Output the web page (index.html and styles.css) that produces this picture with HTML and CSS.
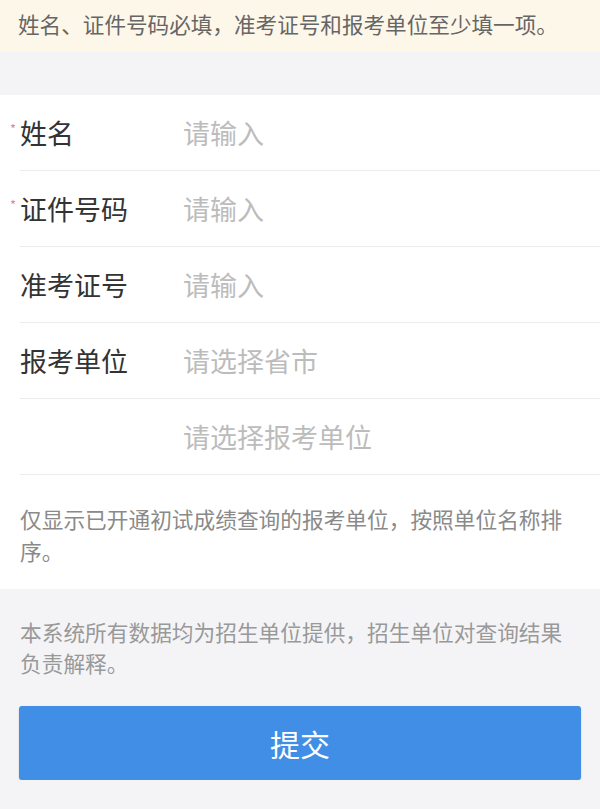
FILE: index.html
```html
<!DOCTYPE html>
<html lang="zh-CN">
<head>
<meta charset="utf-8">
<title>查询</title>
<link rel="stylesheet" href="styles.css">
</head>
<body>
<div class="notice">姓名、证件号码必填，准考证号和报考单位至少填一项。</div>
<div class="form">
  <div class="row"><span class="label req">姓名</span><span class="ph">请输入</span></div>
  <div class="row"><span class="label req">证件号码</span><span class="ph">请输入</span></div>
  <div class="row"><span class="label">准考证号</span><span class="ph">请输入</span></div>
  <div class="row"><span class="label">报考单位</span><span class="ph">请选择省市</span></div>
  <div class="row"><span class="label"></span><span class="ph">请选择报考单位</span></div>
  <p class="tip">仅显示已开通初试成绩查询的报考单位，按照单位名称排序。</p>
</div>
<div class="footer">
  <p class="tip">本系统所有数据均为招生单位提供，招生单位对查询结果负责解释。</p>
  <button class="submit">提交</button>
</div>
</body>
</html>
```
FILE: styles.css
```css
* { box-sizing: border-box; }
body {
  margin: 0;
  background: #f4f4f6;
  font-family: "Noto Sans CJK SC", "Noto Sans", sans-serif;
}
.notice {
  height: 52px;
  line-height: 48px;
  padding-left: 18px;
  background: #fdf7ea;
  color: #666;
  font-size: 21.6px;
  white-space: nowrap;
}
.form {
  margin-top: 43px;
  background: #fff;
}
.row {
  display: flex;
  align-items: center;
  height: 76px;
  margin-left: 20px;
  border-bottom: 1px solid #ececec;
}
.label {
  position: relative;
  width: 163px;
  flex: none;
  font-size: 27px;
  line-height: 39px;
  color: #333;
}
.label.req::before {
  content: "*";
  position: absolute;
  left: -10px;
  top: 9px;
  font-size: 13px;
  line-height: 13px;
  color: #d88a9a;
}
.ph {
  font-size: 27px;
  color: #bcbcbc;
}
.tip {
  margin: 0;
  padding: 28px 30px 22px 20px;
  font-size: 21.7px;
  line-height: 32px;
  color: #8a8a8a;
}
.footer .tip {
  padding: 27px 30px 28px 20px;
  line-height: 31px;
  color: #999;
}
.submit {
  display: block;
  width: calc(100% - 38px);
  height: 74px;
  margin: 0 19px;
  border: none;
  border-radius: 3px;
  background: #418ee6;
  color: #fff;
  font-family: inherit;
  font-size: 30px;
  box-shadow: 0 1px 2px rgba(0,0,0,0.15);
}
```
